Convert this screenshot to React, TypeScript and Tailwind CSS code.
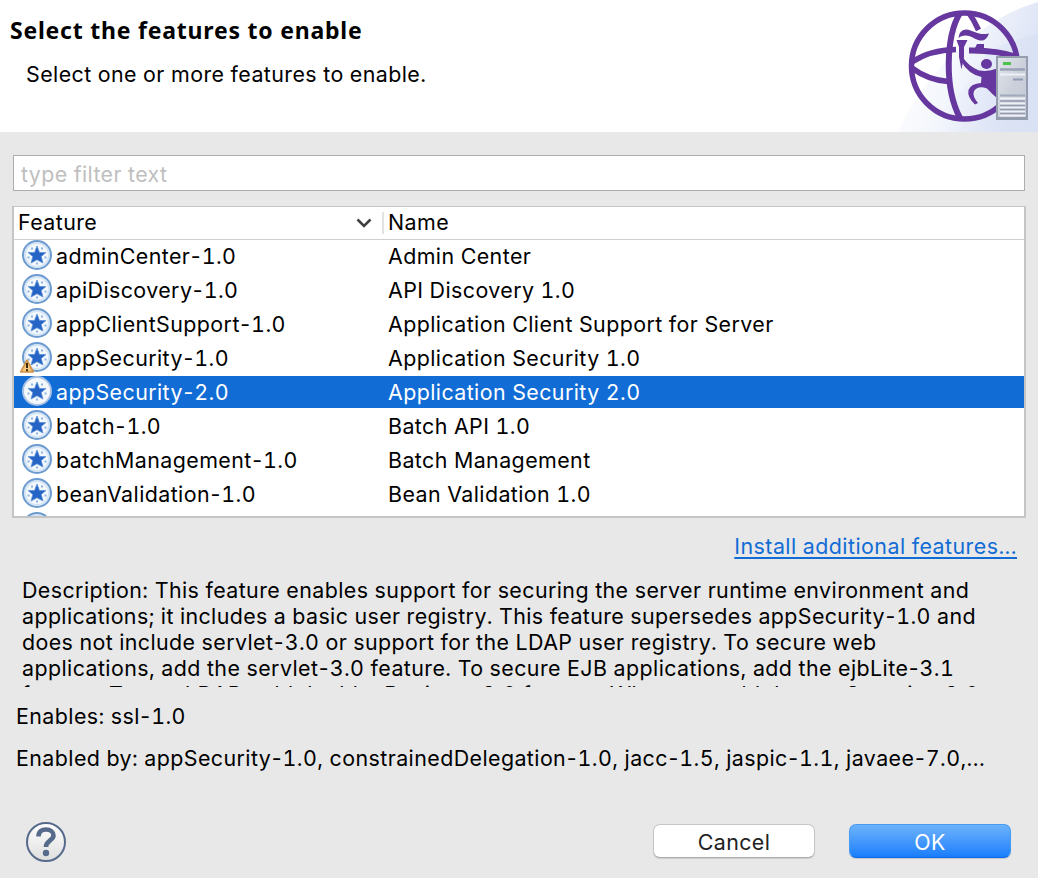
import React from "react";

type Feature = { id: string; name: string; warn?: boolean };

const features: Feature[] = [
  { id: "adminCenter-1.0", name: "Admin Center" },
  { id: "apiDiscovery-1.0", name: "API Discovery 1.0" },
  { id: "appClientSupport-1.0", name: "Application Client Support for Server" },
  { id: "appSecurity-1.0", name: "Application Security 1.0", warn: true },
  { id: "appSecurity-2.0", name: "Application Security 2.0" },
  { id: "batch-1.0", name: "Batch API 1.0" },
  { id: "batchManagement-1.0", name: "Batch Management" },
  { id: "beanValidation-1.0", name: "Bean Validation 1.0" },
];

const SELECTED = "appSecurity-2.0";

const description = [
  { text: "Description: This feature enables support for securing the server runtime environment and", cls: "" },
  { text: "applications; it includes a basic user registry. This feature supersedes appSecurity-1.0 and", cls: "tracking-[0.385px]" },
  { text: "does not include servlet-3.0 or support for the LDAP user registry. To secure web", cls: "tracking-[0.4px]" },
  { text: "applications, add the servlet-3.0 feature. To secure EJB applications, add the ejbLite-3.1", cls: "" },
  { text: "feature. To use LDAP, add the ldapRegistry-3.0 feature. When you add the appSecurity-2.0", cls: "" },
];

/** Text whose hyphens are set tighter than the tabular digits around them. */
function Hyphenated({ text }: { text: string }) {
  return (
    <>
      {text.split("-").map((part, i) => (
        <React.Fragment key={i}>
          {i > 0 && <span className="-mx-[1.5px]">-</span>}
          {part}
        </React.Fragment>
      ))}
    </>
  );
}

function FeatureIcon({ warn, selected }: { warn?: boolean; selected?: boolean }) {
  return (
    <svg width="34" height="34" viewBox="0 0 34 34" className="block shrink-0 overflow-visible">
      <circle cx="17" cy="16" r="13.800" fill="#f3f8fd" stroke={selected ? "#a9c2e3" : "#6c9bd0"} strokeWidth="2.400" />
      <circle cx="17" cy="16" r="12" fill="none" stroke={selected ? "#f3f7fc" : "#d5e4f5"} strokeWidth="2" />
      <path d="M17 7 19.500 13.500H26L21.200 17.500 23 24 17 20.800 11 24 12.800 17.500 8 13.500H14.500Z" fill="#2563c4" stroke="#5f92d8" strokeWidth="0.800" />
      <g fill="#8fb4e0">
        <rect x="11" y="8.500" width="2" height="2" />
        <rect x="21" y="8.500" width="2" height="2" />
        <rect x="7.500" y="17.500" width="2" height="2" />
        <rect x="24.500" y="17.500" width="2" height="2" />
        <rect x="16" y="23.500" width="2" height="2" />
      </g>
      {warn && (
        <g>
          <path d="M7 19.200 13.300 31H0.700Z" fill="#f6c57a" stroke="#cf9248" strokeWidth="1.600" strokeLinejoin="round" />
          <path d="M7 22v5M7 28.300v1.900" stroke="#3a2a10" strokeWidth="2" />
        </g>
      )}
    </svg>
  );
}

function Logo() {
  return (
    <svg width="140" height="132" viewBox="0 0 140 132" className="block">
      <defs>
        <linearGradient id="sky" x1="0.100" y1="0" x2="1" y2="0.300">
          <stop offset="0" stopColor="#ffffff" />
          <stop offset="0.5" stopColor="#f3f6fc" />
          <stop offset="1" stopColor="#dde4f5" />
        </linearGradient>
        <linearGradient id="glow" x1="0" y1="0" x2="1" y2="0">
          <stop offset="0.3" stopColor="#d5def3" stopOpacity="0" />
          <stop offset="1" stopColor="#d5def3" stopOpacity="0.500" />
        </linearGradient>
        <linearGradient id="tower" x1="0" y1="0" x2="1" y2="1">
          <stop offset="0" stopColor="#e0e5eb" />
          <stop offset="0.5" stopColor="#ccd0da" />
          <stop offset="1" stopColor="#c2c9d6" />
        </linearGradient>
      </defs>
      <path d="M0 132C22 84 72 22 140 2V132Z" fill="url(#sky)" />
      <path d="M88 54Q105 42 140 34V132H0Q50 124 88 54Z" fill="url(#glow)" />
      <g fill="none" stroke="#66379e">
        <circle cx="66.500" cy="66" r="53" strokeWidth="5.500" />
        <path d="M62 13C48 36 46 88 62 118" strokeWidth="6" />
        <path d="M71 13Q76 20 80.500 30" strokeWidth="5.500" />
        <path d="M14 62Q32 50 58 49.500" strokeWidth="5.500" />
        <path d="M14 68Q30 80 50 81.500" strokeWidth="5.500" />
        <path d="M71 50.500Q98 50 119 57" strokeWidth="6" />
      </g>
      <g fill="#66379e">
        <path d="M60.500 38Q61 30 68 29.500C76 30 80 36 91 33.500Q88 41.500 82 40.500C75 39 69 32 60.500 38Z" />
        <path d="M58.500 40H69.500L66 47V57L63.500 69.500 61 57V47Z" />
        <path d="M79 44H86V50H76Z" />
        <ellipse cx="88.500" cy="64" rx="5.500" ry="5" />
        <path d="M64 56Q70 66 81 70.500Q91 72 99 68.500V98Q94 94 89 88.500Q80 85 76 91Q74 96 80 103L77 104.500Q69 97 70.500 90Q73 83.500 83 83L83.500 77Q70 74 63 61Z" />
      </g>
      <rect x="98" y="56" width="32" height="64" fill="#949dae" />
      <rect x="100" y="58" width="28" height="59" fill="url(#tower)" />
      <path d="M105 63.500h8" stroke="#4cc24c" strokeWidth="3" />
      <path d="M102 69.500h25" stroke="#98a2b7" strokeWidth="2.500" />
      <path d="M102 74.500h25" stroke="#edf0f6" strokeWidth="2" />
      <path d="M115 79.500h10" stroke="#8f9bb5" strokeWidth="2" />
      <path d="M102 95.500h25" stroke="#a1aabb" strokeWidth="2" />
      <path d="M102 98.500h25M102 103.500h25M102 107.500h25M102 111.500h25M102 115.500h25" stroke="#edf0f6" strokeWidth="2" />
      <path d="M102 101h25M102 105.500h25M102 109.500h25M102 113.500h25" stroke="#929bae" strokeWidth="1.600" />
    </svg>
  );
}

export default function App() {
  return (
    <div className="flex h-[878px] w-[1038px] flex-col overflow-hidden bg-[#e8e8e8] font-['Inter',sans-serif] text-[21.4px] leading-[26px] tracking-[0.42px] whitespace-nowrap text-black tabular-nums">
      <header className="flex h-[132px] shrink-0 justify-between bg-white">
        <div className="flex flex-col pt-[17px] pl-2.5">
          <h1 className="font-['Noto_Sans',sans-serif] text-[23px] leading-[26px] font-bold tracking-[0.78px]">Select the features to enable</h1>
          <p className="mt-[18px] pl-4">Select one or more features to enable.</p>
        </div>
        <Logo />
      </header>

      <main className="flex flex-col pt-[23px]">
        <input
          className="mr-[13px] ml-[13px] h-9 border border-[#adadad] bg-white px-[7px] pt-0.5 tracking-[0.385px] outline-none placeholder:text-[#bfbfbf]"
          placeholder="type filter text"
        />

        <section className="mt-[15px] ml-3 flex h-[312px] w-[1014px] flex-col overflow-hidden border-2 border-t border-[#c5c5c5] bg-white">
          <div className="flex h-[33px] shrink-0 items-center border-b border-[#d0d0d0]">
            <div className="flex w-[368px] items-center justify-between pr-2.5 pb-0.5 pl-1">
              <span>Feature</span>
              <svg width="16" height="10" viewBox="0 0 16 10" fill="none" stroke="#404040" strokeWidth="2.500" className="mt-0.5">
                <path d="M1.500 1.500 8 8l6.500-6.500" />
              </svg>
            </div>
            <div className="h-[22px] border-l-2 border-[#e2e2e2]" />
            <span className="pb-0.5 pl-1">Name</span>
          </div>
          {features.map((f) => {
            const selected = f.id === SELECTED;
            return (
              <div key={f.id} className="h-[34px] shrink-0">
                <div className={selected ? "flex h-8 items-center bg-[#116cd6] text-white" : "flex h-8 items-center"}>
                  <div className="flex w-[374px] items-center pl-1.5">
                    <FeatureIcon warn={f.warn} selected={selected} />
                    <span className="pl-0.5">
                      <Hyphenated text={f.id} />
                    </span>
                  </div>
                  <span>{f.name}</span>
                </div>
              </div>
            );
          })}
          <div className="flex h-8 shrink-0 items-center pl-1.5">
            <FeatureIcon />
          </div>
        </section>

        <a className="mt-[15px] mr-[21px] self-end tracking-[0.45px] text-[#116cd6] underline decoration-2 underline-offset-[3px]">Install additional features...</a>

        <div className="mt-[18px] h-[110px] overflow-hidden pl-[22px]">
          {description.map((line) => (
            <p key={line.text} className={line.cls}>
              <Hyphenated text={line.text} />
            </p>
          ))}
        </div>
        <p className="mt-4 pl-4">
          <Hyphenated text="Enables: ssl-1.0" />
        </p>
        <p className="mt-4 pl-4">
          <Hyphenated text="Enabled by: appSecurity-1.0, constrainedDelegation-1.0, jacc-1.5, jaspic-1.1, javaee-7.0,..." />
        </p>
      </main>

      <footer className="mt-[50px] flex items-start pl-[25px]">
        <svg width="42" height="42" viewBox="0 0 42 42" className="block">
          <defs>
            <linearGradient id="help" x1="0" y1="0" x2="0" y2="1">
              <stop offset="0" stopColor="#ffffff" />
              <stop offset="1" stopColor="#dedede" />
            </linearGradient>
          </defs>
          <circle cx="21" cy="21" r="19" fill="url(#help)" stroke="#566b8c" strokeWidth="2" />
          <path d="M13.500 15.500C13.500 10.500 17 8.500 21 8.500C25.500 8.500 28.500 11 28.500 14.500C28.500 19.500 21 19.500 21 26" fill="none" stroke="#566b8c" strokeWidth="4.600" />
          <circle cx="21" cy="32" r="3.200" fill="#566b8c" />
        </svg>
        <button className="mt-[3px] ml-[586px] flex h-[34px] w-[162px] items-center justify-center rounded-[7px] border border-[#c6c6c6] border-b-[#adadad] bg-white pt-0.5 text-[#222] shadow-[0_1px_1px_rgba(0,0,0,0.12)]">Cancel</button>
        <button className="mt-[3px] ml-[34px] flex h-[34px] w-[162px] items-center justify-center rounded-[7px] border border-[#479cf3] border-b-[#1268ed] bg-linear-to-b from-[#6bb2fa] to-[#167efc] pt-0.5 text-white shadow-[0_1px_1px_rgba(0,0,0,0.15)]">OK</button>
      </footer>
    </div>
  );
}
